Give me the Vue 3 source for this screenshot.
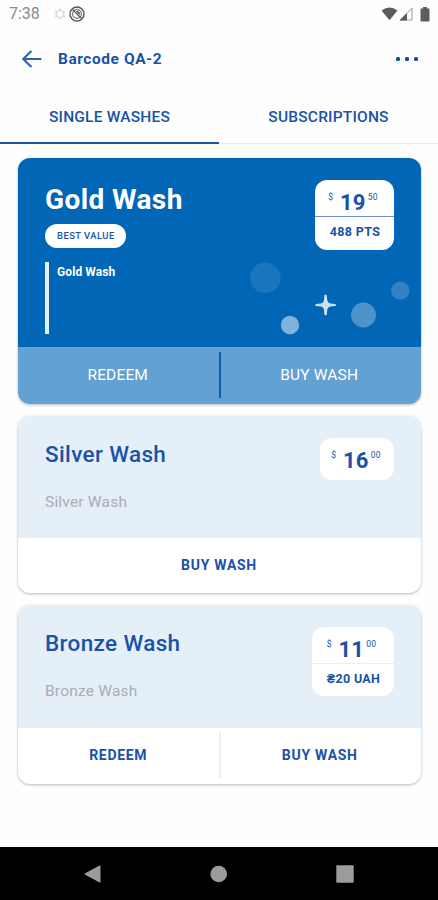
<template>
  <div class="screen">
    <div class="status-bar">
      <span class="time">7:38</span>
      <svg class="status-gear" width="14" height="14" viewBox="0 0 14 14">
        <path
          d="M7 1.5V12.5M2.2 4.2 11.8 9.8M11.8 4.2 2.2 9.8"
          fill="none"
          stroke="#dedede"
          stroke-width="2.4"
        />
        <circle cx="7" cy="7" r="3.6" fill="#fefefe" stroke="#dedede" stroke-width="1.5" />
      </svg>
      <svg class="status-sync" width="16" height="16" viewBox="0 0 16 16">
        <circle cx="8" cy="8" r="7" fill="none" stroke="#555" stroke-width="1.4" />
        <circle cx="8" cy="8" r="4.4" fill="none" stroke="#777" stroke-width="1.2" />
        <path d="M3.5 3.6 12.3 12.2" stroke="#555" stroke-width="1.3" />
        <path d="M7 5.2A3 3 0 0 1 10.8 9Z" fill="#444" />
      </svg>
      <div class="status-right">
        <svg width="17" height="14" viewBox="0 0 17 14">
          <path d="M.5 3.4Q8.5-2.4 16.5 3.4L8.5 13.3Z" fill="#5c5c5c" />
        </svg>
        <svg class="signal" width="14" height="14" viewBox="0 0 14 14">
          <path d="M1.2 13 13 1.2V13Z" fill="#fff" stroke="#999" stroke-width="1" />
          <path d="M.5 13.5 8 6V13.5Z" fill="#5c5c5c" />
        </svg>
        <svg class="battery" width="10" height="15" viewBox="0 0 10 15">
          <path d="M3 0H7V1.6H9Q9.5 1.6 9.5 2.3V13.8Q9.5 14.5 8.8 14.5H1.2Q.5 14.5.5 13.8V2.3Q.5 1.6 1 1.6H3Z" fill="#5c5c5c" />
        </svg>
      </div>
    </div>

    <header class="app-bar">
      <svg class="back" width="20" height="18" viewBox="0 0 20 18">
        <path d="M9.4.9 1.3 9 9.4 17.1M1.3 9H19.4" fill="none" stroke="#2f62ad" stroke-width="2.1" />
      </svg>
      <h1>Barcode QA-2</h1>
      <div class="more"><i></i><i></i><i></i></div>
    </header>

    <nav class="tabs">
      <button class="tab active"><span>SINGLE WASHES</span></button>
      <button class="tab"><span>SUBSCRIPTIONS</span></button>
    </nav>

    <main class="cards">
      <section v-for="wash in washes" :key="wash.name" class="card" :class="wash.tier">
        <div class="card-head">
          <div class="info">
            <h2>{{ wash.name }}</h2>
            <span v-if="wash.badge" class="badge">{{ wash.badge }}</span>
            <p class="description">{{ wash.name }}</p>
          </div>
          <div class="price-box">
            <div class="price">
              <span class="currency">$</span>
              <span class="amount">{{ wash.amount }}</span>
              <span class="cents">{{ wash.cents }}</span>
            </div>
            <div v-if="wash.points" class="points">{{ wash.points }}</div>
          </div>
          <svg v-if="wash.tier === 'gold'" class="bubbles" width="160" height="76" viewBox="0 0 160 76">
            <circle cx="15.3" cy="15.7" r="15.3" fill="#1a75bc" />
            <circle cx="40" cy="63" r="9.2" fill="#7fb2dd" />
            <circle cx="113.5" cy="53" r="12.5" fill="#4d94cd" />
            <circle cx="150.3" cy="28.6" r="9.2" fill="#3382c4" />
            <path
              d="M74.4 33.2Q75.6 32 76.8 33.2L77.3 38.6Q77.8 41 80.2 41.4L85.4 42Q86.6 43 85.4 44L80.2 44.6Q77.8 45 77.3 47.4L76.8 52.8Q75.6 54 74.4 52.8L73.9 47.4Q73.4 45 71 44.6L65.8 44Q64.6 43 65.8 42L71 41.4Q73.4 41 73.9 38.6Z"
              fill="#cbe0f2"
            />
          </svg>
        </div>
        <div class="actions">
          <button v-for="action in wash.actions" :key="action">
            <span>{{ action }}</span>
          </button>
        </div>
      </section>
    </main>

    <footer class="nav-bar">
      <svg width="17" height="18" viewBox="0 0 17 18">
        <path d="M.8 9 16 .8V17.2Z" fill="#9c9c9c" stroke="#9c9c9c" stroke-width="1" stroke-linejoin="round" />
      </svg>
      <svg width="17" height="18" viewBox="0 0 17 18">
        <circle cx="8.7" cy="9" r="8.3" fill="#9c9c9c" />
      </svg>
      <svg width="18" height="18" viewBox="0 0 18 18">
        <rect x=".3" y=".3" width="17.4" height="17.4" rx="1" fill="#9c9c9c" />
      </svg>
    </footer>
  </div>
</template>

<script setup>
const washes = [
  {
    name: 'Gold Wash',
    tier: 'gold',
    badge: 'BEST VALUE',
    amount: '19',
    cents: '50',
    points: '488 PTS',
    actions: ['REDEEM', 'BUY WASH'],
  },
  {
    name: 'Silver Wash',
    tier: 'silver',
    amount: '16',
    cents: '00',
    actions: ['BUY WASH'],
  },
  {
    name: 'Bronze Wash',
    tier: 'bronze',
    amount: '11',
    cents: '00',
    points: '₴20 UAH',
    actions: ['REDEEM', 'BUY WASH'],
  },
]
</script>

<style>
body {
  margin: 0;
  background: #fefefe;
}
</style>

<style scoped>
.screen {
  display: flex;
  flex-direction: column;
  width: 438px;
  height: 900px;
  overflow: hidden;
  background: #fefefe;
  color: #1a52a6;
  font-family: Roboto, 'Liberation Sans', sans-serif;
}

.screen * {
  box-sizing: border-box;
}

h1,
h2,
p {
  margin: 0;
}

button {
  padding: 0;
  border: 0;
  background: none;
  color: inherit;
  font: inherit;
}

svg {
  display: block;
  flex: none;
}

/* Status bar */
.status-bar {
  display: flex;
  align-items: center;
  height: 28px;
  padding: 0 8px 0 9px;
}

.time {
  width: 44px;
  color: #8a8a8a;
  font-size: 16px;
  line-height: 28px;
}

.status-sync {
  margin-left: 2px;
}

.status-right {
  display: flex;
  align-items: center;
  margin-left: auto;
}

.signal {
  margin-left: 1px;
}

.battery {
  margin-left: 7px;
}

/* App bar */
.app-bar {
  display: flex;
  align-items: center;
  height: 61px;
  padding: 0 20px 0 22px;
}

h1 {
  margin-left: 16px;
  font-size: 15.5px;
  font-weight: 700;
  letter-spacing: 0.55px;
}

.more {
  display: flex;
  gap: 5px;
  margin-left: auto;
}

.more i {
  width: 4px;
  height: 4px;
  border-radius: 1.5px;
  background: #1348a2;
}

/* Tabs */
.tabs {
  display: flex;
  height: 55px;
}

.tab {
  flex: 1;
  padding-top: 2px;
  border-bottom: 1px solid #ececec;
  font-size: 15.5px;
  font-weight: 500;
  letter-spacing: 0.2px;
}

.tab.active {
  padding-top: 3px;
  border-bottom: 2px solid #2255a8;
}

/* Cards */
.cards {
  display: flex;
  flex: 1;
  flex-direction: column;
  gap: 12px;
  padding: 14px 17px 0 18px;
}

.card {
  overflow: hidden;
  border-radius: 12px;
  background: #fff;
  box-shadow: 0 1px 3px rgba(0, 0, 0, 0.28);
}

.card-head {
  position: relative;
  display: flex;
  align-items: flex-start;
  justify-content: space-between;
  height: 122px;
  padding: 22px 27px 0;
  background: #e4eff8;
}

.bronze .card-head {
  height: 123px;
}

.gold .card-head {
  height: 189px;
  background: #0066b5;
}

.info {
  display: flex;
  flex-direction: column;
  align-items: flex-start;
}

h2 {
  font-size: 22.5px;
  font-weight: 500;
  line-height: 32px;
  letter-spacing: 0.35px;
}

.description {
  margin-top: 22px;
  color: #a9adb1;
  font-size: 15.5px;
  line-height: 20px;
  letter-spacing: 0.2px;
}

.gold h2 {
  margin-top: 4px;
  color: #fff;
  font-size: 28px;
  font-weight: 700;
  letter-spacing: 0.4px;
}

.badge {
  height: 24px;
  margin-top: 8px;
  padding: 0 11px 0 12px;
  border-radius: 12px;
  background: #fff;
  font-size: 9.5px;
  font-weight: 500;
  line-height: 24px;
  letter-spacing: 0.4px;
}

.gold .description {
  height: 72px;
  margin-top: 14px;
  padding-left: 8px;
  border-left: 4px solid #e8f0fb;
  color: #fff;
  font-size: 12px;
  font-weight: 700;
  letter-spacing: 0.1px;
}

/* Price box */
.price-box {
  width: 74px;
  border-radius: 12px;
  background: #fff;
}

.gold .price-box {
  width: 79px;
}

.bronze .price-box {
  width: 82px;
}

.price {
  display: flex;
  align-items: flex-start;
  justify-content: center;
  height: 42px;
  padding: 12px 2px 0 0;
}

.gold .price,
.bronze .price {
  height: 36px;
  padding-right: 3px;
}

.currency,
.cents {
  margin-top: -1px;
  font-size: 8.5px;
  line-height: 12px;
}

.cents {
  letter-spacing: 0.3px;
}

.amount {
  margin: 0 2px 0 7px;
  font-size: 22px;
  font-weight: 700;
  line-height: 22px;
  letter-spacing: 0.2px;
}

.points {
  height: 33px;
  padding-left: 1px;
  border-top: 1px solid #e8eff6;
  font-size: 12.5px;
  font-weight: 700;
  line-height: 29px;
  text-align: center;
  letter-spacing: 0.35px;
}

.gold .points {
  height: 34px;
  border-top-color: #6b8fc8;
}

.bubbles {
  position: absolute;
  top: 104px;
  left: 232px;
}

/* Actions */
.actions {
  display: flex;
  height: 55px;
}

.bronze .actions {
  height: 56px;
}

.actions button {
  position: relative;
  flex: 1;
  padding: 0 1px 2px 0;
  font-size: 14px;
  font-weight: 700;
  letter-spacing: 0.7px;
}

.actions button + button::before {
  position: absolute;
  top: 5px;
  bottom: 6px;
  left: -1px;
  width: 2px;
  background: #e4eff6;
  content: '';
}

.gold .actions {
  height: 57px;
  background: #62a1d1;
  color: #fff;
}

.gold .actions button {
  padding-right: 2px;
  font-size: 15.5px;
  font-weight: 400;
  letter-spacing: 0.15px;
}

.gold .actions button + button::before {
  background: #0a5eae;
}

/* Navigation bar */
.nav-bar {
  display: flex;
  align-items: center;
  justify-content: space-between;
  height: 53px;
  padding: 0 84px 0 84px;
  background: #000;
}
</style>
